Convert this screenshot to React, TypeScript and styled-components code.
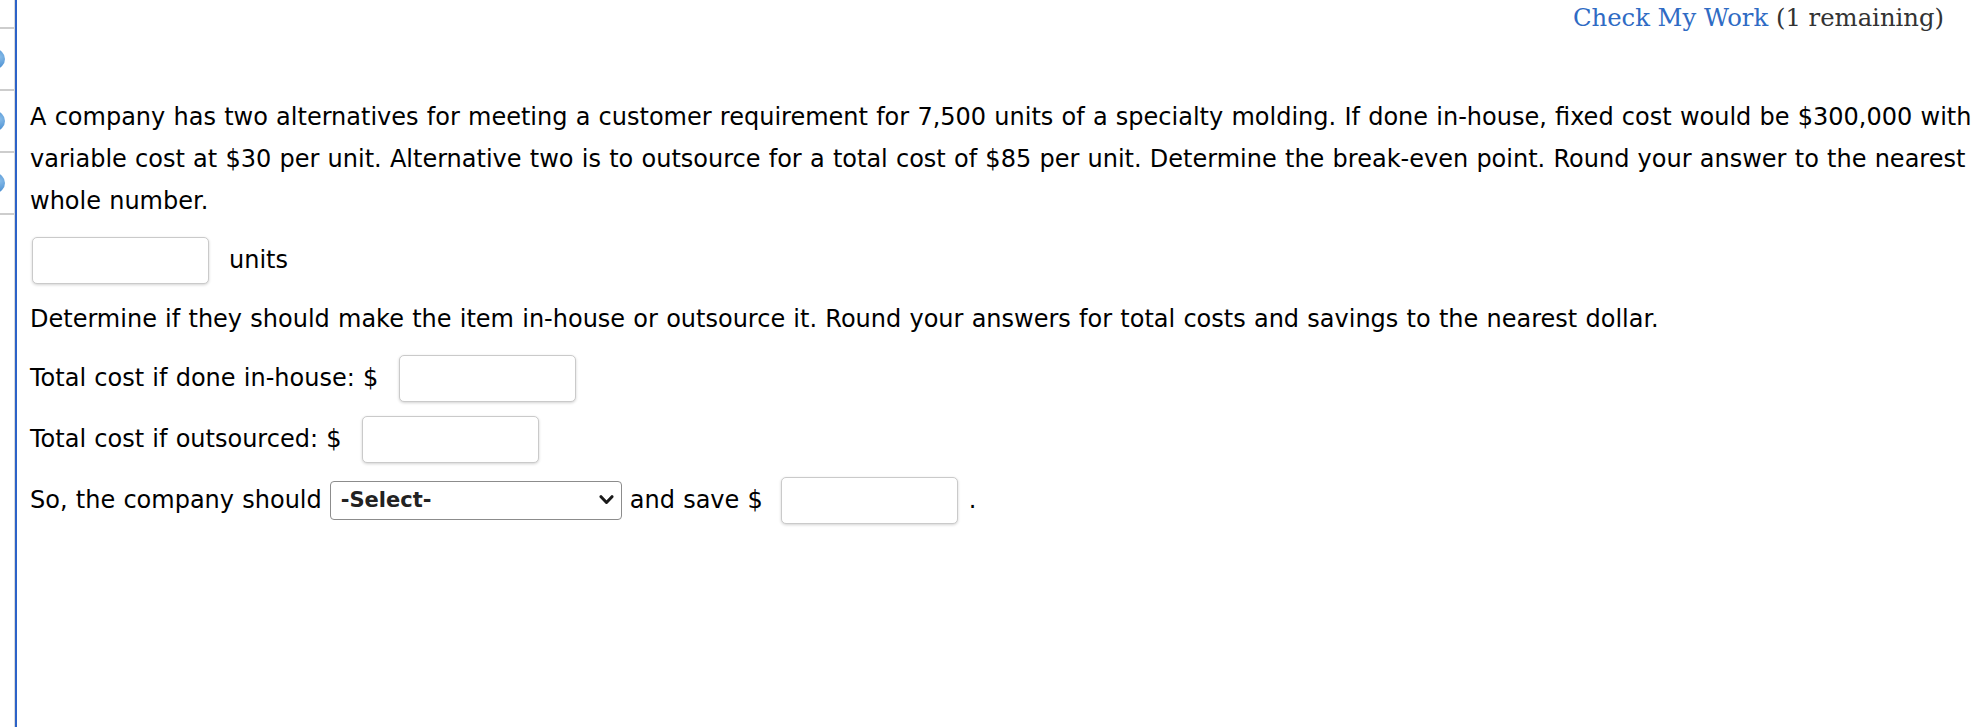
import React from "react";
import styled, { createGlobalStyle } from "styled-components";

const GlobalStyle = createGlobalStyle`
  html, body { margin: 0; padding: 0; background: #fff; }
  body { font-family: "DejaVu Sans", Verdana, sans-serif; }
  #root { height: 100vh; }
`;

const Page = styled.div`
  display: flex;
  height: 100vh;
  overflow: hidden;
  background: #fff;
`;

const Rail = styled.div`
  flex: none;
  width: 14px;
  border-right: 1px solid #d9d9d9;
  overflow: hidden;
  display: flex;
  flex-direction: column;
`;

const RailTop = styled.div`
  flex: none;
  height: 27px;
  border-bottom: 2px solid #cdcdcd;
`;

const RailItem = styled.div`
  flex: none;
  height: 60px;
  border-bottom: 2px solid #cdcdcd;
  display: flex;
  align-items: center;
`;

const Dot = styled.span`
  flex: none;
  width: 20px;
  height: 20px;
  margin-left: -15px;
  border-radius: 50%;
  background: radial-gradient(circle at 75% 40%, #86bbe8 0%, #4f92d3 55%, #3d7fc3 100%);
`;

const Main = styled.main`
  flex: 1;
  min-width: 0;
  border-left: 2px solid #2c62c8;
  padding-left: 13px;
  display: flex;
  flex-direction: column;
`;

const Header = styled.div`
  display: flex;
  justify-content: flex-end;
  align-items: baseline;
  height: 36px;
  padding-right: 35px;
  font-family: "DejaVu Serif", "Liberation Serif", serif;
  font-size: 24.3px;
  line-height: 36px;
  white-space: pre;
`;

const CheckLink = styled.a`
  color: #2f6bc4;
  text-decoration: none;
  cursor: pointer;
`;

const Remaining = styled.span`
  color: #333;
`;

const Content = styled.div`
  margin-top: 60px;
  display: flex;
  flex-direction: column;
  gap: 15px;
  font-size: 24px;
  color: #000;
  word-spacing: 0.6px;
`;

const Para = styled.p`
  margin: 0;
  line-height: 42px;
`;

const Row = styled.div`
  display: flex;
  align-items: center;
  height: 46px;
  white-space: pre;
`;

const Field = styled.input<{ $before?: number; $after?: number }>`
  box-sizing: border-box;
  flex: none;
  width: 177px;
  height: 47px;
  margin: 0 ${(p) => p.$after ?? 0}px 0 ${(p) => p.$before ?? 0}px;
  border: 1px solid #cacaca;
  border-radius: 5px;
  box-shadow: 0 1px 3px rgba(0, 0, 0, 0.18);
  background: #fff;
  font: inherit;
  padding: 0 8px;
  outline: none;
`;

const SelectWrap = styled.span`
  position: relative;
  flex: none;
  display: inline-flex;
  margin: 0 8px;
`;

const Select = styled.select`
  appearance: none;
  -webkit-appearance: none;
  box-sizing: border-box;
  width: 292px;
  height: 39px;
  border: 1px solid #8c8c8c;
  border-radius: 4px;
  background: #fff;
  padding: 0 30px 0 10px;
  font-family: "DejaVu Sans", Verdana, sans-serif;
  font-weight: bold;
  font-size: 21px;
  color: #222;
  outline: none;
`;

const Chevron = styled.svg`
  position: absolute;
  right: 8px;
  top: 50%;
  transform: translateY(-50%);
  pointer-events: none;
`;

const Unit = styled.span``;

export default function App() {
  return (
    <>
      <GlobalStyle />
      <Page>
        <Rail>
          <RailTop />
          <RailItem><Dot /></RailItem>
          <RailItem><Dot /></RailItem>
          <RailItem><Dot /></RailItem>
        </Rail>
        <Main>
          <Header>
            <CheckLink>Check My Work</CheckLink>
            <Remaining> (1 remaining)</Remaining>
          </Header>
          <Content>
            <Para>
              A company has two alternatives for meeting a customer requirement for 7,500 units of a specialty molding. If done in-house, fixed cost would be $300,000 with variable cost at $30 per unit. Alternative two is to outsource for a total cost of $85 per unit. Determine the break-even point. Round your answer to the nearest whole number.
            </Para>
            <Row>
              <Field $before={2} $after={20} aria-label="break-even units" />
              <Unit>units</Unit>
            </Row>
            <Para>
              Determine if they should make the item in-house or outsource it. Round your answers for total costs and savings to the nearest dollar.
            </Para>
            <Row>
              <Unit>Total cost if done in-house: $</Unit>
              <Field $before={21} aria-label="total cost in-house" />
            </Row>
            <Row>
              <Unit>Total cost if outsourced: $</Unit>
              <Field $before={21} aria-label="total cost outsourced" />
            </Row>
            <Row>
              <Unit>So, the company should</Unit>
              <SelectWrap>
                <Select defaultValue="">
                  <option value="">-Select-</option>
                  <option value="make">make the item in-house</option>
                  <option value="outsource">outsource it</option>
                </Select>
                <Chevron width="15" height="11" viewBox="0 0 15 11">
                  <path d="M2 2.2 L7.5 8 L13 2.2" fill="none" stroke="#1a1a1a" strokeWidth="3" strokeLinecap="round" strokeLinejoin="round" />
                </Chevron>
              </SelectWrap>
              <Unit>and save $</Unit>
              <Field $before={18} $after={11} aria-label="savings" />
              <Unit>.</Unit>
            </Row>
          </Content>
        </Main>
      </Page>
    </>
  );
}
